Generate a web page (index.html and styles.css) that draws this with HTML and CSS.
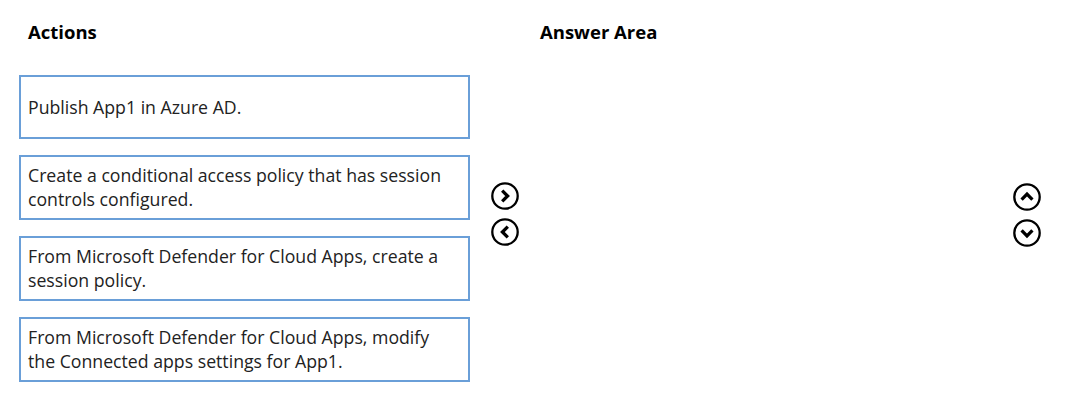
FILE: index.html
```html
<!DOCTYPE html>
<html>
<head>
<meta charset="utf-8">
<link rel="stylesheet" href="styles.css">
</head>
<body>
<div class="page">
  <section class="actions">
    <h2 class="heading">Actions</h2>
    <div class="list">
      <div class="item single">Publish App1 in Azure AD.</div>
      <div class="item">Create a conditional access policy that has session controls configured.</div>
      <div class="item">From Microsoft Defender for Cloud Apps, create a session policy.</div>
      <div class="item">From Microsoft Defender for Cloud Apps, modify the Connected apps settings for App1.</div>
    </div>
  </section>
  <div class="movers">
    <svg class="btn" viewBox="0 0 28 28" width="28" height="28"><circle cx="14" cy="14" r="12.7"/><path d="M11.2 8.6 L16.6 14 L11.2 19.4"/></svg>
    <svg class="btn" viewBox="0 0 28 28" width="28" height="28"><circle cx="14" cy="14" r="12.7"/><path d="M16.8 8.6 L11.4 14 L16.8 19.4"/></svg>
  </div>
  <section class="answer">
    <h2 class="heading">Answer Area</h2>
  </section>
  <div class="order">
    <svg class="btn" viewBox="0 0 28 28" width="28" height="28"><circle cx="14" cy="14" r="12.7"/><path d="M8.6 16.6 L14 11.2 L19.4 16.6"/></svg>
    <svg class="btn" viewBox="0 0 28 28" width="28" height="28"><circle cx="14" cy="14" r="12.7"/><path d="M8.6 11.4 L14 16.8 L19.4 11.4"/></svg>
  </div>
</div>
</body>
</html>
```

FILE: styles.css
```css
html, body {
  margin: 0;
  padding: 0;
  background: #ffffff;
}
.page {
  display: flex;
  width: 1069px;
  height: 407px;
  padding-left: 19px;
  box-sizing: border-box;
  font-family: "Open Sans", Lato, sans-serif;
  color: #222222;
}
.heading {
  margin: 0;
  padding-top: 20px;
  padding-left: 9px;
  font-size: 18.5px;
  line-height: 24px;
  font-weight: bold;
  color: #000;
}
.actions {
  width: 451px;
  flex: none;
}
.list {
  display: flex;
  flex-direction: column;
  gap: 16px;
  margin-top: 31px;
}
.item {
  height: 65px;
  box-sizing: border-box;
  border: 2px solid #6a9fd8;
  padding: 6px 12px 0 7px;
  font-size: 17.7px;
  line-height: 24px;
}
.item.single {
  display: flex;
  align-items: center;
  padding-top: 0;
  height: 64px;
}
.movers {
  flex: none;
  display: flex;
  flex-direction: column;
  gap: 8px;
  margin-left: 21px;
  padding-top: 182px;
}
.answer {
  flex: 1;
  margin-left: 12px;
}
.order {
  flex: none;
  display: flex;
  flex-direction: column;
  gap: 8px;
  margin-right: 28px;
  padding-top: 183px;
}
.btn {
  display: block;
  flex: none;
  width: 28px;
  height: 28px;
  fill: none;
  stroke: #000;
}
.btn circle {
  stroke-width: 2.3;
}
.btn path {
  stroke-width: 3.3;
  stroke-linejoin: miter;
}
```
